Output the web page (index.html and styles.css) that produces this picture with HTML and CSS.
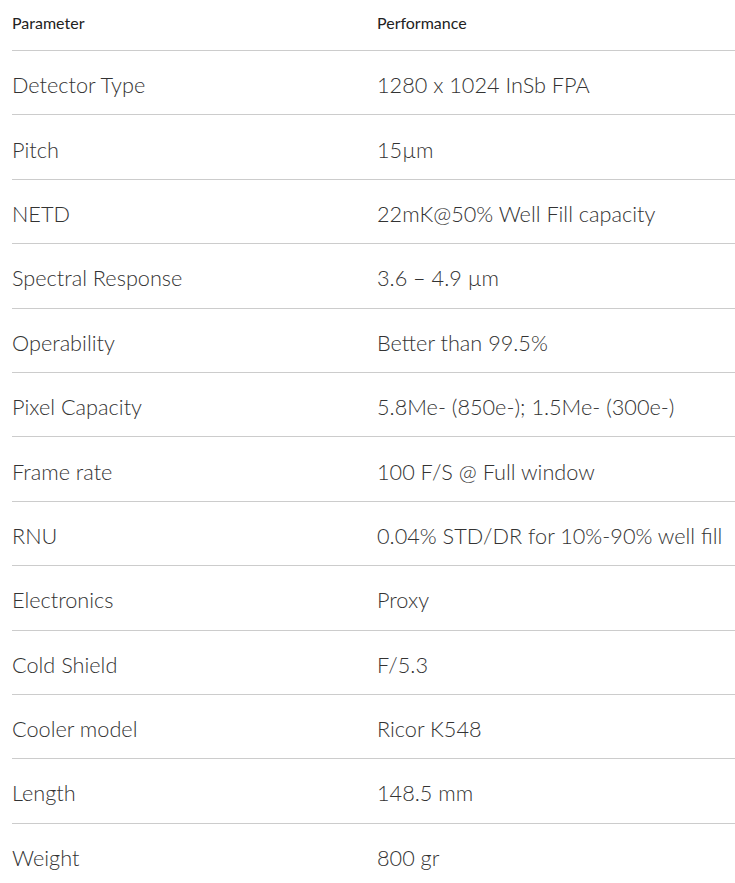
FILE: index.html
```html
<!DOCTYPE html>
<html>
<head>
<meta charset="utf-8">
<link rel="stylesheet" href="styles.css">
</head>
<body>
<table class="spec">
  <thead>
    <tr><th class="col1">Parameter</th><th>Performance</th></tr>
  </thead>
  <tbody>
    <tr><td>Detector Type</td><td>1280 x 1024 InSb FPA</td></tr>
    <tr><td>Pitch</td><td>15µm</td></tr>
    <tr><td>NETD</td><td>22mK@50% Well Fill capacity</td></tr>
    <tr><td>Spectral Response</td><td>3.6 – 4.9 µm</td></tr>
    <tr><td>Operability</td><td>Better than 99.5%</td></tr>
    <tr><td>Pixel Capacity</td><td>5.8Me- (850e-); 1.5Me- (300e-)</td></tr>
    <tr><td>Frame rate</td><td>100 F/S @ Full window</td></tr>
    <tr><td>RNU</td><td>0.04% STD/DR for 10%-90% well fill</td></tr>
    <tr><td>Electronics</td><td>Proxy</td></tr>
    <tr><td>Cold Shield</td><td>F/5.3</td></tr>
    <tr><td>Cooler model</td><td>Ricor K548</td></tr>
    <tr><td>Length</td><td>148.5 mm</td></tr>
    <tr class="last"><td>Weight</td><td>800 gr</td></tr>
  </tbody>
</table>
</body>
</html>
```

FILE: styles.css
```css
html, body {
  margin: 0;
  padding: 0;
  background: #fff;
}
body {
  padding-left: 12px;
  font-family: Lato, "Open Sans", sans-serif;
  color: #333;
}
.spec {
  width: 723px;
  border-collapse: collapse;
}
.spec th {
  text-align: left;
  font-size: 16px;
  font-weight: 400;
  color: #222;
  height: 45px;
  padding: 0 0 5px 0;
  vertical-align: middle;
  border-bottom: 1px solid #ccc;
}
.spec .col1 {
  width: 365px;
}
.spec td {
  font-size: 21.7px;
  font-weight: 300;
  height: 64.4px;
  padding: 5px 0 0 0;
  box-sizing: border-box;
  vertical-align: middle;
  border-bottom: 1px solid #ccc;
  white-space: nowrap;
}
.spec tr.last td {
  border-bottom: none;
}
```
